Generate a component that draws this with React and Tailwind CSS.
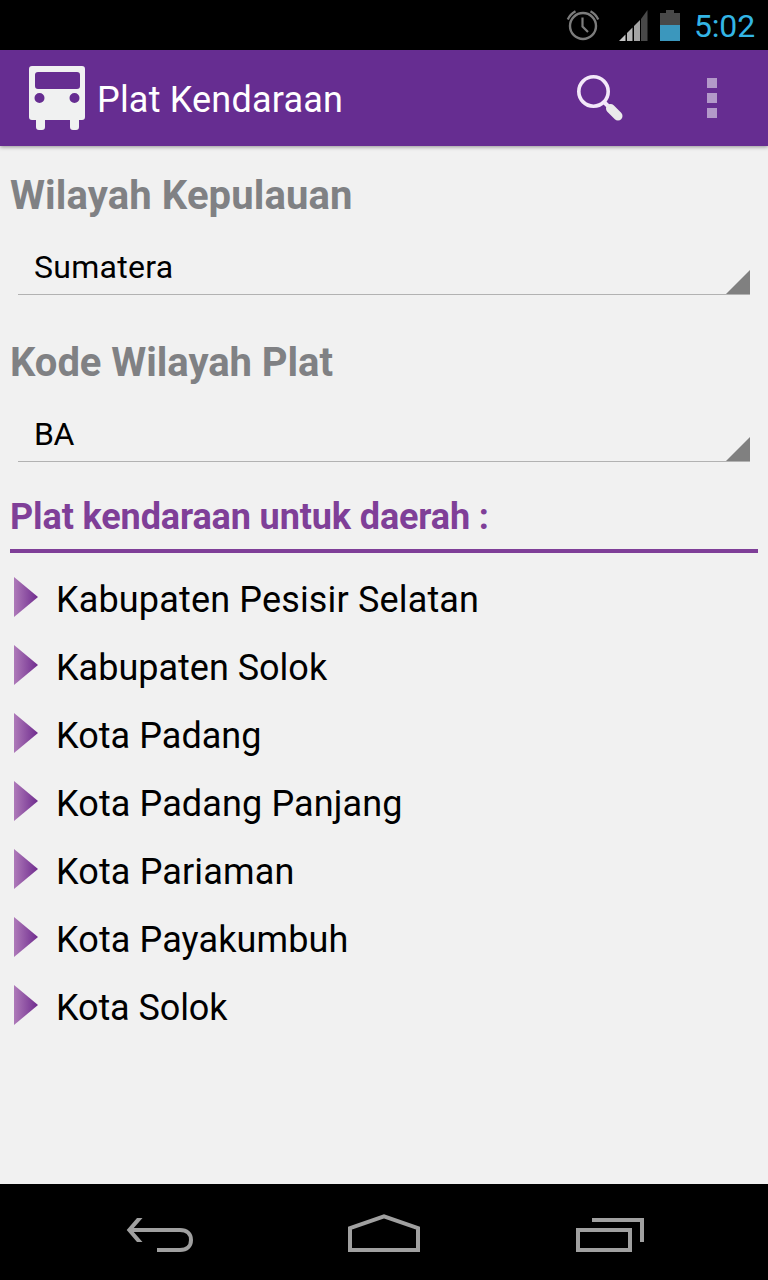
import clsx from 'clsx';

const regions = [
    { name: 'Kabupaten Pesisir Selatan', tracking: 'tracking-[0.16px]' },
    { name: 'Kabupaten Solok', tracking: 'tracking-normal' },
    { name: 'Kota Padang', tracking: 'tracking-[0.05px]' },
    { name: 'Kota Padang Panjang', tracking: 'tracking-[0.12px]' },
    { name: 'Kota Pariaman', tracking: 'tracking-[0.14px]' },
    { name: 'Kota Payakumbuh', tracking: 'tracking-[0.12px]' },
    { name: 'Kota Solok', tracking: 'tracking-[-0.1px]' },
];

const StatusBar = () => {
    return (
        <div className="h-[50px] shrink-0 bg-black flex items-center justify-end pr-[13px]">
            <svg className="w-[34px] h-[34px] mr-[19px]" viewBox="0 0 34 34" fill="none" stroke="#7c7c7c">
                <circle cx="17" cy="18" r="13" strokeWidth="2.4" />
                <path d="M16.5 9.5V18.5L22 24" strokeWidth="2.2" />
                <path d="M1.8 11.5A17 17 0 0 1 9.5 3.2M24.5 3.2A17 17 0 0 1 32.2 11.5" strokeWidth="2.4" />
            </svg>
            <svg className="w-[30px] h-8 mr-[11px]" viewBox="0 0 30 32">
                <path d="M0 32L6.5 25.5V32Z" fill="#c4c4c4" />
                <path d="M8 24L13.5 18.5V32H8Z" fill="#b4b4b4" />
                <path d="M15 17L21 11V32H15Z" fill="#a4a4a4" />
                <path d="M22 10L28.5 1V32H22Z" fill="#484848" />
            </svg>
            <svg className="w-5 h-8 mr-3.5" viewBox="0 0 20 32">
                <path d="M6 1H14V4H20V16H0V4H6Z" fill="#484848" />
                <path d="M0 16H20V32H0Z" fill="#3b97bd" />
            </svg>
            <span className="text-[32px] leading-[50px] tracking-[-0.15px] text-[#33b5e5] relative top-px">5:02</span>
        </div>
    );
};

const Header = () => {
    return (
        <header className="h-24 shrink-0 relative z-10 bg-[#662d91] flex items-center shadow-[0_1px_4px_rgba(0,0,0,0.4)]">
            <svg className="w-14 h-16 ml-[29px]" viewBox="0 0 56 64">
                <path
                    fillRule="evenodd"
                    fill="#f0f1f1"
                    d="M3 0H53Q56 0 56 3V51Q56 54 53 54H50V61Q50 64 47 64H44Q41 64 41 61V54H16V61Q16 64 13 64H10Q7 64 7 61V54H3Q0 54 0 51V3Q0 0 3 0ZM9 6Q6 6 6 9V20Q6 23 9 23H48Q51 23 51 20V9Q51 6 48 6ZM10.5 27A5 5 0 1 0 10.5 37A5 5 0 1 0 10.5 27ZM45.5 27A5 5 0 1 0 45.5 37A5 5 0 1 0 45.5 27Z"
                />
            </svg>
            <h1 className="ml-3 pt-1 text-4xl leading-[48px] tracking-[0.2px] text-white">Plat Kendaraan</h1>
            <svg className="w-12 h-12 ml-auto mr-[83px]" viewBox="0 0 48 48" fill="none">
                <circle cx="17.5" cy="17.5" r="14.7" stroke="#f3e8f9" strokeWidth="3.6" />
                <path d="M28 28L33 33" stroke="#f3e8f9" strokeWidth="4" />
                <path d="M34.5 34.5L42 42" stroke="#ebebeb" strokeWidth="9" strokeLinecap="round" />
            </svg>
            <div className="flex flex-col gap-[5px] mr-[51px]">
                <i className="w-2.5 h-2.5 bg-[#b399c9]" />
                <i className="w-2.5 h-2.5 bg-[#b399c9]" />
                <i className="w-2.5 h-2.5 bg-[#b399c9]" />
            </div>
        </header>
    );
};

const Spinner = ({ label, value, className, labelClassName, valueClassName }) => {
    return (
        <div className={clsx('flex flex-col', className)}>
            <h2 className={clsx('pl-2.5 text-[40px] leading-[48px] font-bold text-[#808184]', labelClassName)}>
                {label}
            </h2>
            <button className="mt-[19px] mx-[18px] h-14 pl-4 flex items-center justify-between border-b border-[#b2b2b2] text-left">
                <span className={clsx('text-[32px] leading-[40px] text-black', valueClassName)}>{value}</span>
                <svg className="w-6 h-6 self-end" viewBox="0 0 24 24">
                    <path d="M24 0V24H0Z" fill="#808080" />
                </svg>
            </button>
        </div>
    );
};

const RegionItem = ({ name, tracking }) => {
    return (
        <li className="h-[68px] flex items-center">
            <svg className="w-6 h-10 ml-3.5 mb-[6px]" viewBox="0 0 24 40">
                <path d="M0 0L24 20L0 40Z" fill="url(#arrow)" />
            </svg>
            <span className={clsx('ml-[18px] text-4xl leading-[48px] text-black', tracking)}>{name}</span>
        </li>
    );
};

const NavBar = () => {
    return (
        <nav className="h-24 shrink-0 bg-black flex items-center pl-[126px] pt-1">
            <svg className="w-[68px] h-10" viewBox="0 0 68 40" fill="none">
                <path d="M5 16H54C61 16 65 20 65 26C65 32 61 36 54 36H31" stroke="#a0a0a0" strokeWidth="4" />
                <path d="M0.7 16L11 4H16.5L6 16L16.5 28H11Z" fill="#a0a0a0" />
            </svg>
            <svg className="w-[72px] h-10 ml-[154px]" viewBox="0 0 72 40" fill="none" stroke="#a0a0a0" strokeWidth="4">
                <path d="M2 36V14.2L36 2.4L70 14.2V36Z" />
            </svg>
            <svg className="w-[68px] h-10 ml-[156px]" viewBox="0 0 68 40" fill="none" stroke="#a0a0a0" strokeWidth="4">
                <path d="M2 16H54V36H2Z" />
                <path d="M16 6H66V28" />
            </svg>
        </nav>
    );
};

const App = () => {
    return (
        <div className="w-[768px] h-[1280px] flex flex-col bg-[#f1f1f1] overflow-hidden font-['Roboto',sans-serif]">
            <svg className="absolute w-0 h-0">
                <defs>
                    <linearGradient id="arrow" x1="0" y1="0" x2="1" y2="0">
                        <stop offset="0" stopColor="#ae7ab9" />
                        <stop offset="1" stopColor="#6f2b8e" />
                    </linearGradient>
                </defs>
            </svg>
            <StatusBar />
            <Header />
            <main className="flex-1 pt-[26px]">
                <Spinner
                    label="Wilayah Kepulauan"
                    value="Sumatera"
                    labelClassName="tracking-[0.12px]"
                    valueClassName="tracking-[0.3px]"
                />
                <Spinner
                    label="Kode Wilayah Plat"
                    value="BA"
                    className="mt-11"
                    labelClassName="tracking-[-0.05px]"
                    valueClassName="tracking-[-0.5px]"
                />
                <h3 className="mt-[23px] mx-2.5 h-[68px] flex items-center border-b-4 border-[#7f3f98] text-4xl leading-[48px] tracking-[-0.12px] font-bold text-[#7f3f98]">
                    Plat kendaraan untuk daerah :
                </h3>
                <ul className="mt-[13px]">
                    {regions.map((region) => (
                        <RegionItem key={region.name} name={region.name} tracking={region.tracking} />
                    ))}
                </ul>
            </main>
            <NavBar />
        </div>
    );
};

export default App;
